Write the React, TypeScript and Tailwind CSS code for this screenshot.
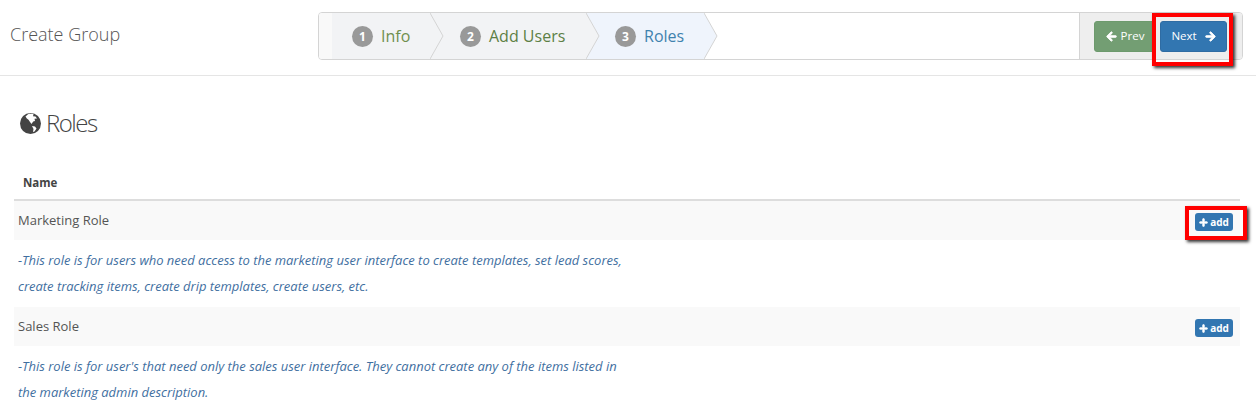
import { FaArrowLeft, FaArrowRight, FaPlus } from "react-icons/fa";

const App = () => {
  return (
    <div className="relative h-[410px] w-[1256px] overflow-hidden bg-white font-['Open_Sans',sans-serif] text-[#555]">
      <div className="flex h-[76px] items-start border-b border-[#e5e5e5] pl-[10px]">
        <div className="mt-[22px] w-[308px] text-[18px] font-light leading-[24px] text-[#555]">Create Group</div>
        <Wizard />
      </div>

      <div className="px-[14px]">
        <h2 className="mt-[31px] flex h-[32px] items-center pl-[6px] text-[24px] font-light tracking-[-1.5px] text-[#444]">
          <GlobeIcon />
          Roles
        </h2>

        <div className="mt-[29px] w-[1226px]">
          <div className="h-[33px] border-b-2 border-[#ddd] pl-[9px] pt-[7px] text-[11.5px] font-bold leading-[16px] text-[#444]">
            Name
          </div>
          <RoleRow
            name="Marketing Role"
            lines={[
              "-This role is for users who need access to the marketing user interface to create templates, set lead scores,",
              "create tracking items, create drip templates, create users, etc.",
            ]}
          />
          <RoleRow
            name="Sales Role"
            lines={[
              "-This role is for user's that need only the sales user interface. They cannot create any of the items listed in",
              "the marketing admin description.",
            ]}
          />
        </div>
      </div>

      {/* red annotation boxes */}
      <div className="absolute left-[1152px] top-[13px] h-[53px] w-[81px] border-[4px] border-[#f00] shadow-[2px_2px_3px_rgba(0,0,0,0.8)]" />
      <div className="absolute left-[1185px] top-[206px] h-[34px] w-[62px] border-[4px] border-[#f00] shadow-[2px_2px_3px_rgba(0,0,0,0.8)]" />
    </div>
  );
};

export default App;

// ========== COMPONENTS ==========

const GlobeIcon = () => {
  return (
    <svg className="mr-[5px] size-[21px]" viewBox="0 0 21 21">
      <circle cx="10.5" cy="10.5" r="10.5" fill="#444" />
      <path
        d="M8 1.2C9.5 .7 12 .7 13.5 1.2L13 3.2L15.5 3.5L17 5.5L14.5 5.8L15 8L13.2 8.6L11.5 11L10 9L8.5 6.8L6.8 5.5L5.5 3.5Z"
        fill="#fff"
      />
      <path d="M12 13L15 13.5L16.5 15.5L14.5 18.5L13 19L13.5 16Z" fill="#fff" />
    </svg>
  );
};

const Wizard = () => {
  return (
    <div className="mt-[12px] flex h-[48px] w-[925px] overflow-hidden rounded-[4px] border border-[#d4d4d4] bg-white">
      <div className="flex flex-1 bg-[linear-gradient(to_right,#f9f9f9_13px,#ffffff_13px)] pl-[13px]">
        <Step num={1} label="Info" width={98} pad="pl-[20px]" textColor="text-[#6f8f4e]" bg="bg-[#f2f3f5]" fill="#f2f3f5" />
        <Step num={2} label="Add Users" width={156} pad="pl-[30px]" textColor="text-[#5d7f45]" bg="bg-[#f2f3f5]" fill="#f2f3f5" />
        <Step num={3} label="Roles" width={118} pad="pl-[29px]" textColor="text-[#3f82ae]" bg="bg-[#eff4fc]" fill="#eff4fc" />
      </div>
      <div className="flex w-[163px] items-center gap-[3px] border-l border-[#d4d4d4] bg-[#eeeeee] pl-[14px]">
        <button className="flex h-[31px] w-[62px] items-center justify-center gap-[4px] rounded-[3px] border border-[#6d9a6d] bg-[#739e73] text-[11.5px] text-white">
          <FaArrowLeft className="size-[11px] stroke-current stroke-[40px]" />
          Prev
        </button>
        <button className="ml-[1px] flex h-[31px] w-[67px] items-center justify-center gap-[8px] rounded-[3px] border border-[#2f6ca3] bg-[#3276b1] text-[11.5px] text-white">
          Next
          <FaArrowRight className="size-[11px] stroke-current stroke-[40px]" />
        </button>
      </div>
    </div>
  );
};

const Step = ({
  num,
  label,
  width,
  pad,
  textColor,
  bg,
  fill,
}: {
  num: number;
  label: string;
  width: number;
  pad: string;
  textColor: string;
  bg: string;
  fill: string;
}) => {
  return (
    <div className="relative h-full" style={{ width }}>
      <div className={`flex h-full items-center ${pad} ${bg}`}>
        <span className="mr-[8px] flex size-[21px] items-center justify-center rounded-full bg-[#999] pt-[1px] text-[12px] font-bold leading-none text-white">
          {num}
        </span>
        <span className={`text-[16px] leading-[22px] ${textColor}`}>{label}</span>
      </div>
      <svg className="absolute left-full top-0 z-10 h-[46px] w-[14px]" viewBox="0 0 14 46" fill="none">
        <path d="M0 0L13 23L0 46Z" fill={fill} />
        <path d="M0 0L13 23L0 46" stroke="#d4d4d4" />
      </svg>
    </div>
  );
};

const AddButton = () => {
  return (
    <button className="mt-[3px] flex h-[18px] w-[38px] items-center justify-center gap-[2px] rounded-[3px] bg-[#3276b1] text-[10px] font-bold text-white">
      <FaPlus className="size-[9px] stroke-current stroke-[40px]" />
      add
    </button>
  );
};

const RoleRow = ({ name, lines }: { name: string; lines: string[] }) => {
  return (
    <div>
      <div className="flex h-[39px] items-center justify-between bg-[#f9f9f9] pl-[4px] pr-[7px] text-[13px] text-[#555]">
        <span>{name}</span>
        <AddButton />
      </div>
      <div className="h-[67px] pt-[7px] text-[12.97px] italic leading-[26px] text-[#3f6f9f]">
        {lines.map((l) => (
          <div key={l} className="pl-[4px]">
            {l}
          </div>
        ))}
      </div>
    </div>
  );
};
